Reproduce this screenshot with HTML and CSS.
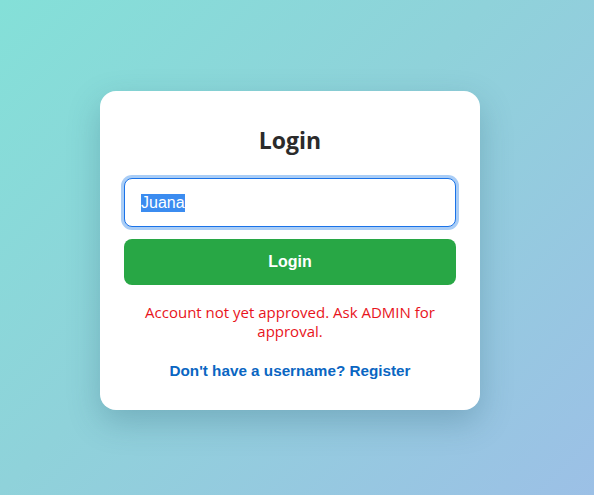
FILE: index.html
```html
<!DOCTYPE html>
<html lang="en">
<head>
<meta charset="utf-8">
<title>Login</title>
<link rel="stylesheet" href="styles.css">
</head>
<body>
  <main class="page">
    <form class="card">
      <h2 class="title">Login</h2>
      <div class="field">
        <input class="input" type="text" value="Juana" id="username">
      </div>
      <button class="btn" type="button">Login</button>
      <p class="error">Account not yet approved. Ask ADMIN for approval.</p>
      <a class="link" href="#">Don't have a username? Register</a>
    </form>
  </main>
  <script>
    var u = document.getElementById('username');
    u.focus();
    u.select();
  </script>
</body>
</html>
```
FILE: styles.css
```css
html, body {
  margin: 0;
  height: 100%;
}

body {
  background: linear-gradient(135deg, #84e0d8 0%, #8fd2da 45%, #9cc0e6 100%);
  font-family: "Open Sans", "Noto Sans", sans-serif;
}

.page {
  height: 100%;
  display: flex;
  justify-content: center;
  padding: 91px 14px 0 0;
  box-sizing: border-box;
}

.card {
  width: 380px;
  height: 319px;
  box-sizing: border-box;
  background: #fff;
  border-radius: 16px;
  box-shadow: 0 12px 32px rgba(40, 90, 110, 0.28);
  padding: 29px 24px 0;
  display: flex;
  flex-direction: column;
  align-items: stretch;
}

.title {
  margin: 0 0 18px;
  text-align: center;
  font-size: 23px;
  font-weight: 700;
  line-height: 40px;
  color: #2b2b2b;
}

.input {
  display: block;
  width: 100%;
  height: 49px;
  box-sizing: border-box;
  border: 1px solid #1a73e8;
  border-radius: 8px;
  padding: 0 16px;
  font-family: "Liberation Sans", Arial, sans-serif;
  font-size: 16px;
  color: #222;
  outline: none;
  box-shadow: 0 0 0 3px #a9cdf6;
}

.input::selection {
  background: #3b8cf0;
  color: #fff;
}

.btn {
  margin-top: 12px;
  height: 46px;
  border: none;
  border-radius: 8px;
  background: #28a745;
  color: #fff;
  font-family: "Liberation Sans", Arial, sans-serif;
  font-size: 16px;
  font-weight: 700;
  cursor: pointer;
}

.error {
  margin: 18px 0 0;
  text-align: center;
  color: #e8141c;
  font-size: 15px;
  line-height: 19px;
  padding: 0 10px;
}

.link {
  margin-top: 21px;
  text-align: center;
  color: #0a66c2;
  font-family: "Liberation Sans", Arial, sans-serif;
  font-size: 15.25px;
  font-weight: 700;
  text-decoration: none;
}
```
